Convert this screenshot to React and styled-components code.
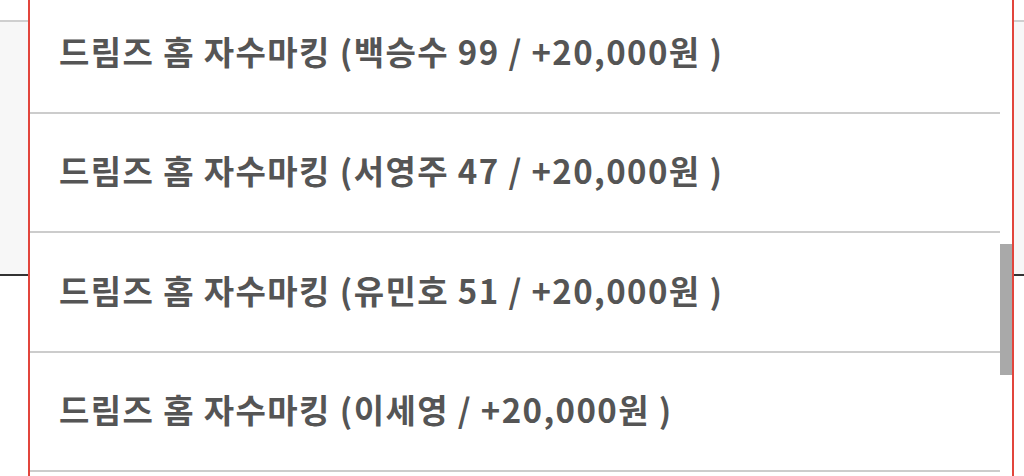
import React from 'react';
import styled, { createGlobalStyle } from 'styled-components';

const GlobalStyle = createGlobalStyle`
  html, body {
    margin: 0;
    padding: 0;
    background: #fff;
    font-family: "Noto Sans CJK KR", "Noto Sans", sans-serif;
  }
`;

const Page = styled.div`
  position: relative;
  width: 1024px;
  height: 476px;
  overflow: hidden;
  background: #fff;
  padding-top: 20px;
  box-sizing: border-box;
`;

const BackPanel = styled.div`
  height: 252px;
  background: #f7f7f7;
  border-top: 2px solid #cfcfcf;
  border-bottom: 2px solid #333;
`;

const Dropdown = styled.div`
  position: absolute;
  top: 0;
  left: 28px;
  width: 986px;
  height: 476px;
  box-sizing: border-box;
  background: #fff;
  border-left: 2px solid #e2453c;
  border-right: 2px solid #e2453c;
  overflow: hidden;
`;

const List = styled.ul`
  list-style: none;
  margin: -6px 12px 0 0;
  padding: 0;
`;

const Option = styled.li`
  height: 119.5px;
  box-sizing: border-box;
  display: flex;
  align-items: center;
  padding: 0 0 4px 29px;
  border-bottom: 2px solid #cccccc;
  font-size: 33px;
  font-weight: 700;
  color: #555;
  letter-spacing: 1.4px;
  white-space: nowrap;
`;

const ScrollThumb = styled.div`
  position: absolute;
  right: 0;
  top: 244px;
  width: 12px;
  height: 131px;
  background: #a9a9a9;
`;

const options = [
  '드림즈 홈 자수마킹 (백승수 99 / +20,000원 )',
  '드림즈 홈 자수마킹 (서영주 47 / +20,000원 )',
  '드림즈 홈 자수마킹 (유민호 51 / +20,000원 )',
  '드림즈 홈 자수마킹 (이세영 / +20,000원 )',
];

const App = () => (
  <>
    <GlobalStyle />
    <Page>
      <BackPanel />
      <Dropdown>
        <List>
          {options.map(label => (
            <Option key={label}>{label}</Option>
          ))}
        </List>
        <ScrollThumb />
      </Dropdown>
    </Page>
  </>
);

export default App;
